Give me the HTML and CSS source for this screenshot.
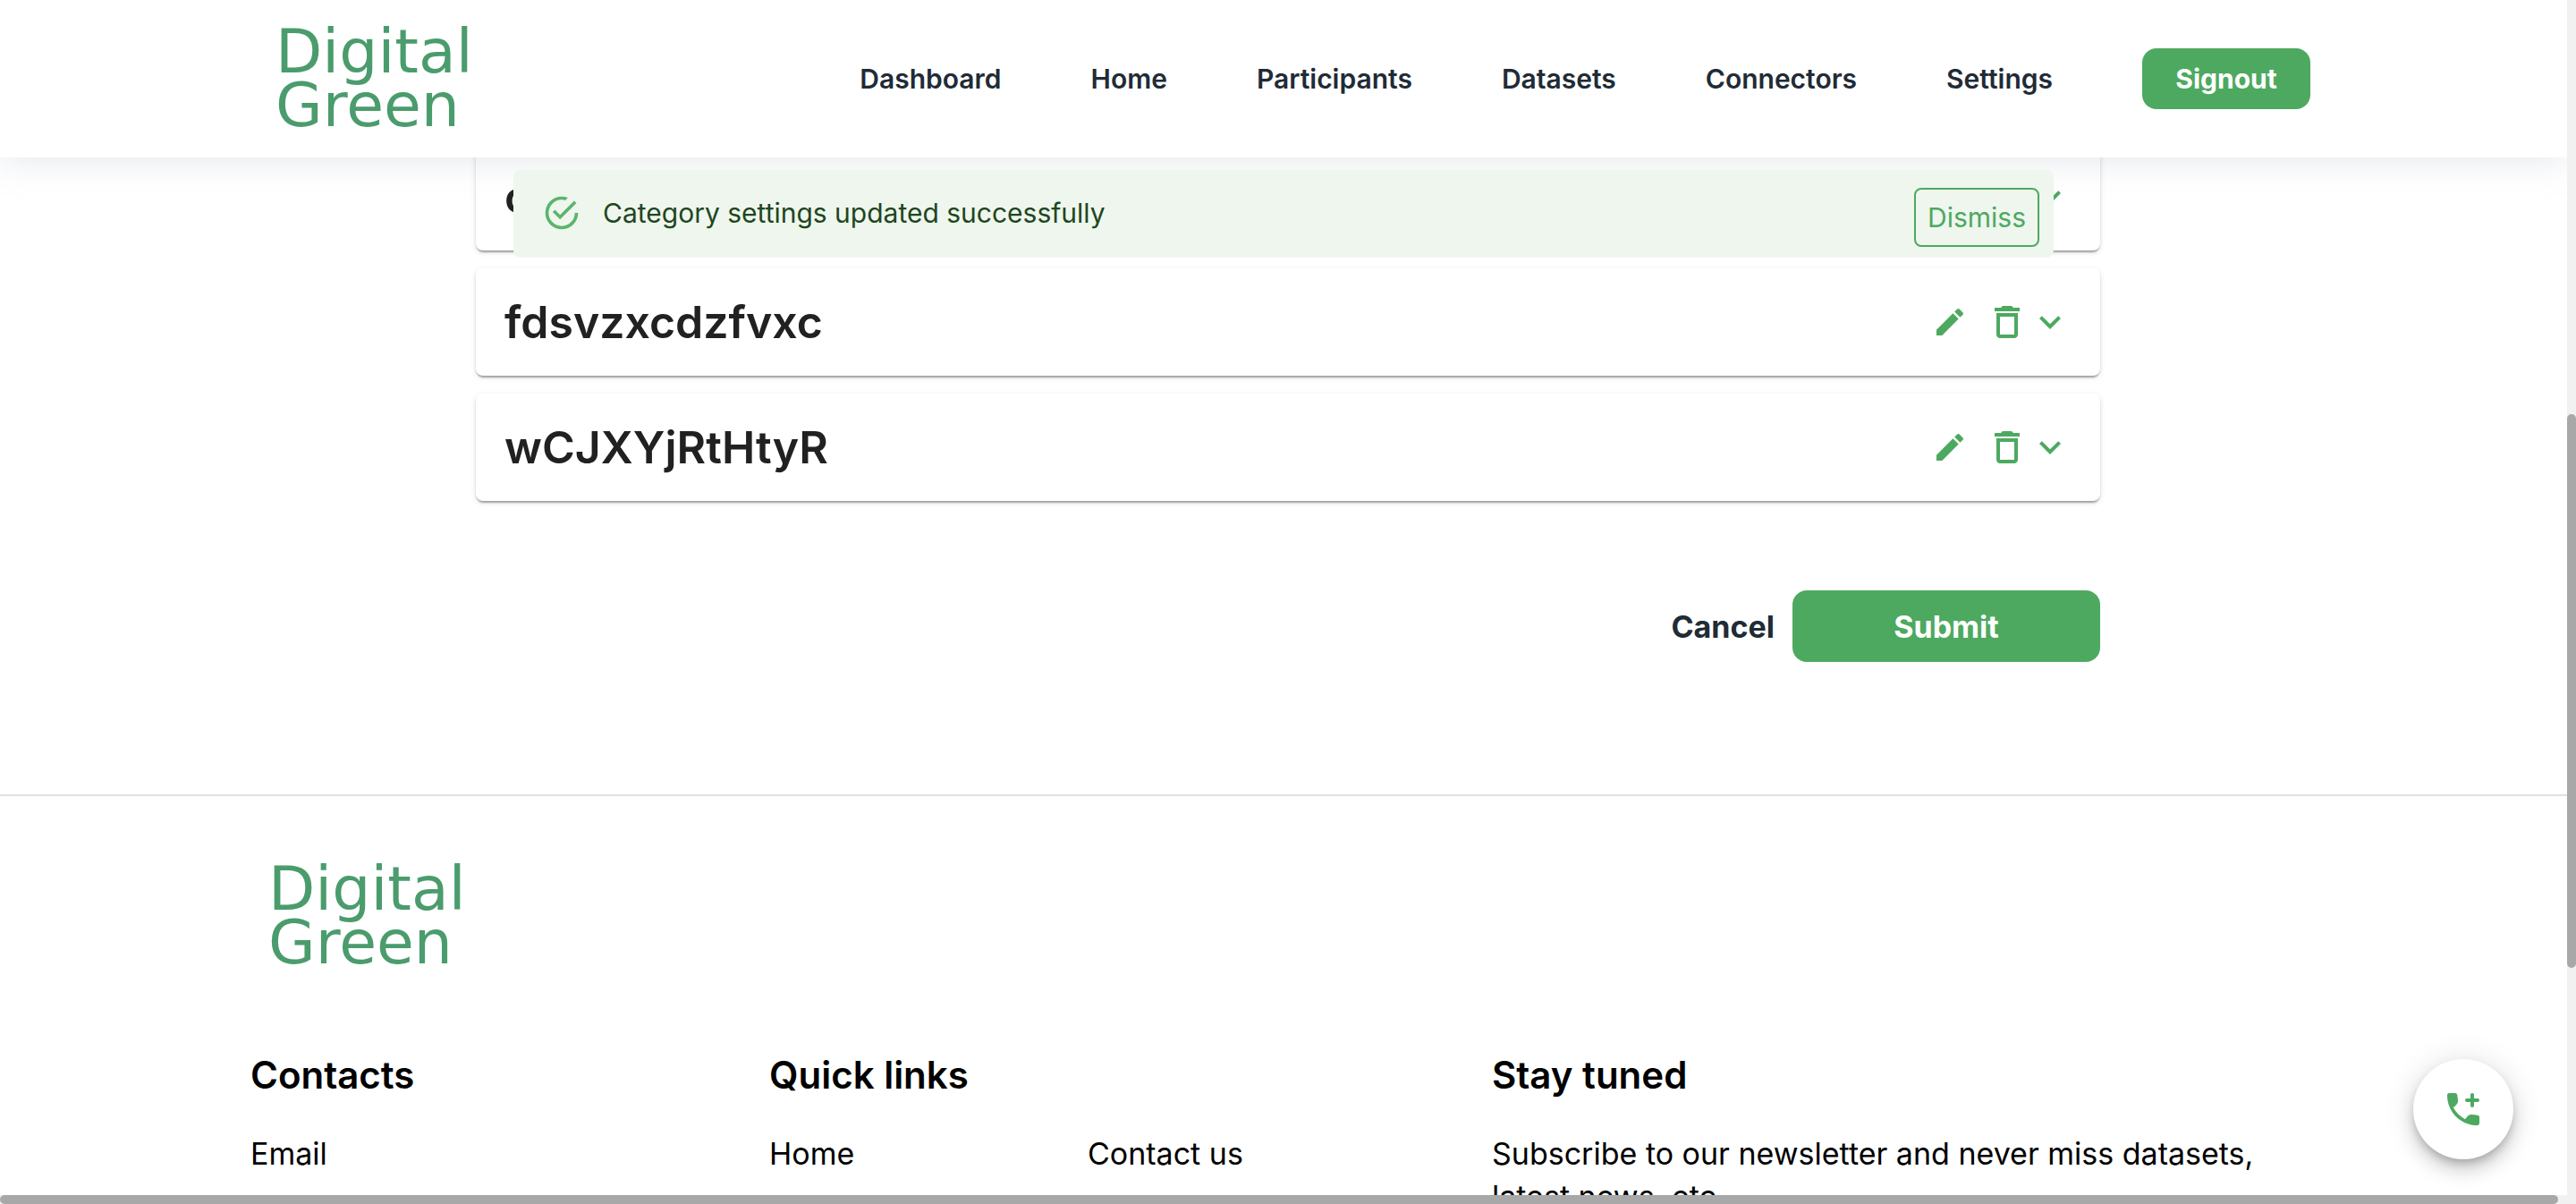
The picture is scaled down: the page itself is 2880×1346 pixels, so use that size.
FILE: index.html
```html
<!DOCTYPE html>
<html lang="en">
<head>
<meta charset="utf-8">
<title>Digital Green</title>
<link rel="stylesheet" href="styles.css">
</head>
<body>
<svg class="sprite" aria-hidden="true">
  <symbol id="edit" viewBox="0 0 24 24"><path d="M3 17.25V21h3.75L17.81 9.94l-3.75-3.75L3 17.25zM20.71 7.04c.39-.39.39-1.02 0-1.41l-2.34-2.34a.996.996 0 0 0-1.41 0l-1.83 1.83 3.75 3.75 1.83-1.83z"/></symbol>
  <symbol id="delete" viewBox="0 0 24 24"><path d="M6 19c0 1.1.9 2 2 2h8c1.1 0 2-.9 2-2V7H6v12zM8 9h8v10H8V9zm7.500-5-1-1h-5l-1 1H5v2h14V4z"/></symbol>
  <symbol id="expand" viewBox="0 0 24 24"><path d="M16.590 8.590 12 13.170 7.410 8.590 6 10l6 6 6-6z"/></symbol>
  <symbol id="success" viewBox="0 0 24 24"><path d="M20 12a8 8 0 1 1-8-8c.76 0 1.500.11 2.200.31l1.570-1.570A9.822 9.822 0 0 0 12 2a10 10 0 1 0 10 10h-2M7.910 10.080 6.500 11.500 11 16 21 6l-1.410-1.420L11 13.170l-3.090-3.090z"/></symbol>
  <symbol id="call" viewBox="0 0 24 24"><path d="M4.200 3h3.300c.6 0 1 .4 1.100 1l.4 2.900c.2 1.700-.6 2.700-2.600 4.100 1.500 2.800 3.700 5 6.600 6.600 1.400-2 2.400-2.800 4.100-2.600l2.900.4c.6.1 1 .5 1 1.100v3.300c0 .8-.5 1.200-1.200 1.200C10.500 21 3 13.500 3 4.200 3 3.500 3.500 3 4.200 3zM17 3c.6 0 1 .4 1 1v2h2a1 1 0 0 1 0 2h-2v2a1 1 0 0 1-2 0V8h-2a1 1 0 0 1 0-2h2V4c0-.6.4-1 1-1z"/></symbol>
</svg>
<div class="shell">
  <div class="page">
    <header class="topbar">
      <a class="logo" href="#">Digital<br>Green</a>
      <nav class="nav">
        <a href="#">Dashboard</a>
        <a href="#">Home</a>
        <a href="#">Participants</a>
        <a href="#">Datasets</a>
        <a href="#">Connectors</a>
        <a href="#">Settings</a>
        <button class="btn signout" type="button">Signout</button>
      </nav>
      <div class="alert" role="alert">
        <svg class="icon-44" aria-hidden="true"><use href="#success"/></svg>
        <span class="alert-text">Category settings updated successfully</span>
        <button class="dismiss" type="button">Dismiss</button>
      </div>
    </header>
    <main class="content">
      <ul class="categories">
        <li class="card">
          <h2>c</h2>
          <button class="tool" type="button" aria-label="Expand"><svg class="icon-48"><use href="#expand"/></svg></button>
        </li>
        <li class="card">
          <h2>fdsvzxcdzfvxc</h2>
          <button class="tool edit" type="button" aria-label="Edit"><svg class="icon-40"><use href="#edit"/></svg></button>
          <button class="tool" type="button" aria-label="Delete"><svg class="icon-48"><use href="#delete"/></svg></button>
          <button class="tool" type="button" aria-label="Expand"><svg class="icon-48"><use href="#expand"/></svg></button>
        </li>
        <li class="card">
          <h2>wCJXYjRtHtyR</h2>
          <button class="tool edit" type="button" aria-label="Edit"><svg class="icon-40"><use href="#edit"/></svg></button>
          <button class="tool" type="button" aria-label="Delete"><svg class="icon-48"><use href="#delete"/></svg></button>
          <button class="tool" type="button" aria-label="Expand"><svg class="icon-48"><use href="#expand"/></svg></button>
        </li>
      </ul>
      <div class="actions">
        <button class="cancel" type="button">Cancel</button>
        <button class="btn submit" type="submit">Submit</button>
      </div>
    </main>
    <footer class="footer">
      <a class="logo" href="#">Digital<br>Green</a>
      <div class="columns">
        <section>
          <h3>Contacts</h3>
          <p>Email</p>
        </section>
        <section>
          <h3>Quick links</h3>
          <div class="links"><a href="#">Home</a><a href="#">Contact us</a></div>
        </section>
        <section>
          <h3>Stay tuned</h3>
          <p class="newsletter">Subscribe to our newsletter and never miss datasets, latest news, etc.</p>
        </section>
      </div>
    </footer>
    <button class="fab" type="button" aria-label="Add call"><svg class="icon-48"><use href="#call"/></svg></button>
  </div>
  <div class="track-y"><div class="thumb"></div></div>
  <div class="track-x"><div class="thumb"></div></div>
</div>
</body>
</html>
```
FILE: styles.css
```css
:root {
  --green: #4da960;
  --ink: #212b36;
}

* { box-sizing: border-box; }

body {
  margin: 0;
  background: #fff;
  color: #000;
  font-family: Inter, "Open Sans", sans-serif;
  font-size: 34px;
}

a { color: inherit; text-decoration: none; }
button { margin: 0; padding: 0; border: 0; background: none; font-family: inherit; cursor: pointer; }
h2, h3, p, ul { margin: 0; padding: 0; }
svg { display: block; fill: currentColor; }

.sprite { position: absolute; width: 0; height: 0; }
.icon-40 { width: 40px; height: 40px; }
.icon-44 { width: 44px; height: 44px; }
.icon-48 { width: 48px; height: 48px; }

.shell {
  display: grid;
  grid-template-columns: minmax(0, 1fr) 10px;
  grid-template-rows: minmax(0, 1fr) 10px;
  height: 100vh;
}

.page { position: relative; overflow: hidden; }

.logo {
  color: #4b9c6d;
  font-family: "DejaVu Sans", sans-serif;
  font-size: 68px;
  line-height: 60px;
}

.topbar {
  position: relative;
  z-index: 2;
  display: flex;
  align-items: center;
  justify-content: space-between;
  height: 176px;
  padding: 0 10% 0 308px;
  background: #fff;
  box-shadow: 0 0 40px rgba(145, 158, 171, 0.28);
}

.nav {
  display: flex;
  align-items: center;
  gap: 100px;
  color: var(--ink);
  font-size: 30px;
  font-weight: 600;
}

.btn { background: var(--green); color: #fff; font-weight: 700; border-radius: 16px; }
.signout { width: 188px; height: 68px; font-size: 30px; }

.alert {
  position: absolute;
  top: 190px;
  left: 20%;
  right: 20%;
  display: flex;
  align-items: center;
  gap: 24px;
  height: 98px;
  padding: 0 16px 2px 32px;
  border-radius: 8px;
  background: #eff6ee;
  color: #1e4620;
  font-size: 30px;
}
.alert svg { color: #5bb56d; }
.alert-text { flex: 1; }

.dismiss {
  align-self: flex-end;
  width: 140px;
  height: 66px;
  margin-bottom: 10px;
  border: 2px solid var(--green);
  border-radius: 8px;
  color: var(--green);
  font-size: 30px;
}

.content {
  margin-top: -16px;
  padding: 0 522px 148px 532px;
}

.categories { display: grid; gap: 20px; list-style: none; }

.card {
  display: flex;
  align-items: center;
  height: 120px;
  padding: 0 32px;
  border-radius: 8px;
  background: #fff;
  color: #212121;
  box-shadow: 0 4px 2px -2px rgba(0, 0, 0, 0.2), 0 2px 2px rgba(0, 0, 0, 0.14), 0 2px 6px rgba(0, 0, 0, 0.12);
}
.card h2 { flex: 1; font-size: 50px; line-height: 60px; font-weight: 600; }

.tool { color: var(--green); }
.edit { margin-right: 20px; }

.actions {
  display: flex;
  justify-content: flex-end;
  gap: 20px;
  margin-top: 100px;
}
.cancel { color: var(--ink); font-size: 34px; font-weight: 700; }
.submit { width: 344px; height: 80px; font-size: 34px; }

.footer { border-top: 2px solid #e0e0e0; padding: 74px 280px 0; }
.footer .logo { display: block; padding-left: 20px; }

.columns {
  display: grid;
  grid-template-columns: 580px 808px minmax(0, 1fr);
  margin-top: 88px;
}
.columns h3 { margin-bottom: 34px; font-size: 42px; line-height: 60px; font-weight: 600; }
.columns p, .links { line-height: 48px; }
.links { display: grid; grid-template-columns: 356px 1fr; }
.newsletter { max-width: 880px; }

.fab {
  position: absolute;
  right: 60px;
  bottom: 40px;
  display: grid;
  place-items: center;
  width: 112px;
  height: 112px;
  border-radius: 50%;
  background: #fff;
  color: var(--green);
  box-shadow: 0 6px 10px -2px rgba(0, 0, 0, 0.2), 0 12px 20px rgba(0, 0, 0, 0.14), 0 2px 36px rgba(0, 0, 0, 0.12);
}

.track-y { padding-top: 463px; background: #f1f1f1; }
.track-y .thumb { height: 619px; }
.track-x { grid-column: 1 / -1; padding-right: 20px; background: #f1f1f1; }
.track-x .thumb { height: 10px; }
.thumb { border-radius: 5px; background: #a8a8a8; }
```
